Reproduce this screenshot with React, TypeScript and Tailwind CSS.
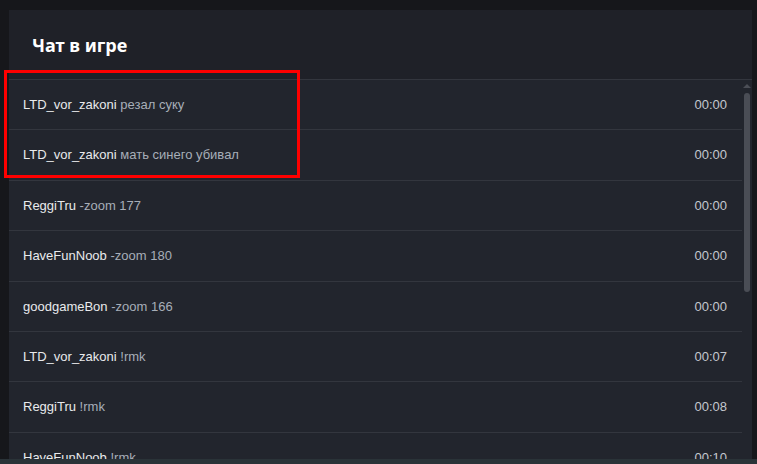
import React from 'react';

type Msg = { name: string; text: string; time: string };

const messages: Msg[] = [
  { name: 'LTD_vor_zakoni', text: 'резал суку', time: '00:00' },
  { name: 'LTD_vor_zakoni', text: 'мать синего убивал', time: '00:00' },
  { name: 'ReggiTru', text: '-zoom 177', time: '00:00' },
  { name: 'HaveFunNoob', text: '-zoom 180', time: '00:00' },
  { name: 'goodgameBon', text: '-zoom 166', time: '00:00' },
  { name: 'LTD_vor_zakoni', text: '!rmk', time: '00:07' },
  { name: 'ReggiTru', text: '!rmk', time: '00:08' },
  { name: 'HaveFunNoob', text: '!rmk', time: '00:10' },
];

const ChatRow: React.FC<{ msg: Msg }> = ({ msg }) => (
  <div className="h-[50.4px] shrink-0 border-t border-[#33363e] flex items-center justify-between pl-[14px] pr-[15px] text-[13px] font-['Liberation_Sans',Arial,sans-serif]">
    <span>
      <span className="text-[#e9eaec]">{msg.name}</span>{' '}
      <span className="text-[#a7aeb8]">{msg.text}</span>
    </span>
    <span className="text-[#c4c8cf]">{msg.time}</span>
  </div>
);

export default function App() {
  return (
    <div className="w-[757px] h-[464px] bg-[#16171b] flex flex-col overflow-hidden relative font-['Noto_Sans',sans-serif]">
      <div className="flex-1 min-h-0 pt-[10px] pl-[9px] pr-[5px] flex">
        <div className="flex-1 bg-[#1f2128] flex flex-col min-h-0">
          <div className="h-[69px] shrink-0 flex items-center pl-[23px] pt-[2px]">
            <h2 className="text-[18px] font-bold text-white">Чат в игре</h2>
          </div>
          <div className="flex-1 min-h-0 flex bg-[#22252d]">
            <div className="flex-1 flex flex-col overflow-hidden">
              {messages.map((m, i) => (
                <ChatRow key={i} msg={m} />
              ))}
            </div>
            {/* scrollbar */}
            <div className="w-[10px] shrink-0 flex flex-col items-center pt-[4px] border-t border-[#33363e]">
              <div className="w-0 h-0 border-l-[4px] border-r-[4px] border-b-[4px] border-l-transparent border-r-transparent border-b-[#4b4e56]" />
              <div className="mt-[5px] w-[6px] h-[199px] rounded-full bg-[#4a4d55]" />
            </div>
          </div>
        </div>
      </div>
      <div className="h-[5px] shrink-0 bg-[#2a3338]" />

      {/* highlight overlay */}
      <div className="absolute left-[4px] top-[70px] w-[296px] h-[108px] border-[3px] border-[#ff0000] pointer-events-none" />
    </div>
  );
}
